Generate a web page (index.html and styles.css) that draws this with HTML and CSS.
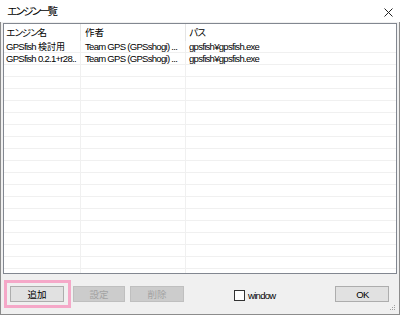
FILE: index.html
```html
<!DOCTYPE html>
<html lang="ja">
<head>
<meta charset="utf-8">
<link rel="stylesheet" href="styles.css">
</head>
<body>
<div class="window">
  <div class="titlebar">
    <span class="title jp">エンジン一覧</span>
    <svg class="close" width="9" height="9" viewBox="0 0 9 9"><path d="M0.5 0.5 L8.5 8.5 M8.5 0.5 L0.5 8.5" stroke="#222" stroke-width="1" fill="none"/></svg>
  </div>
  <div class="client">
    <div class="list">
      <div class="row head">
        <div class="cell c1"><span class="jp kana">エンジン名</span></div>
        <div class="cell c2"><span class="jp">作者</span></div>
        <div class="cell c3"><span class="jp kana">パス</span></div>
      </div>
      <div class="body">
        <div class="row"><div class="cell c1">GPSfish <span class="jp">検討用</span></div><div class="cell c2">Team GPS (GPSshogi) ...</div><div class="cell c3">gpsfish¥gpsfish.exe</div></div>
        <div class="row"><div class="cell c1">GPSfish 0.2.1+r28..</div><div class="cell c2">Team GPS (GPSshogi) ...</div><div class="cell c3">gpsfish¥gpsfish.exe</div></div>
        <div class="row"><div class="cell c1"></div><div class="cell c2"></div><div class="cell c3"></div></div>
        <div class="row"><div class="cell c1"></div><div class="cell c2"></div><div class="cell c3"></div></div>
        <div class="row"><div class="cell c1"></div><div class="cell c2"></div><div class="cell c3"></div></div>
        <div class="row"><div class="cell c1"></div><div class="cell c2"></div><div class="cell c3"></div></div>
        <div class="row"><div class="cell c1"></div><div class="cell c2"></div><div class="cell c3"></div></div>
        <div class="row"><div class="cell c1"></div><div class="cell c2"></div><div class="cell c3"></div></div>
        <div class="row"><div class="cell c1"></div><div class="cell c2"></div><div class="cell c3"></div></div>
        <div class="row"><div class="cell c1"></div><div class="cell c2"></div><div class="cell c3"></div></div>
        <div class="row"><div class="cell c1"></div><div class="cell c2"></div><div class="cell c3"></div></div>
        <div class="row"><div class="cell c1"></div><div class="cell c2"></div><div class="cell c3"></div></div>
        <div class="row"><div class="cell c1"></div><div class="cell c2"></div><div class="cell c3"></div></div>
        <div class="row"><div class="cell c1"></div><div class="cell c2"></div><div class="cell c3"></div></div>
        <div class="row"><div class="cell c1"></div><div class="cell c2"></div><div class="cell c3"></div></div>
        <div class="row"><div class="cell c1"></div><div class="cell c2"></div><div class="cell c3"></div></div>
        <div class="row"><div class="cell c1"></div><div class="cell c2"></div><div class="cell c3"></div></div>
        <div class="row"><div class="cell c1"></div><div class="cell c2"></div><div class="cell c3"></div></div>
        <div class="row"><div class="cell c1"></div><div class="cell c2"></div><div class="cell c3"></div></div>
        <div class="row"><div class="cell c1"></div><div class="cell c2"></div><div class="cell c3"></div></div>
      </div>
    </div>
    <div class="footer">
      <div class="btn btn-add highlight"><span class="jp">追加</span></div>
      <div class="btn disabled btn-set"><span class="jp">設定</span></div>
      <div class="btn disabled btn-del"><span class="jp">削除</span></div>
      <label class="check"><span class="box"></span><span class="check-label">window</span></label>
      <div class="btn btn-ok">OK</div>
      <svg class="grip" width="8" height="8" viewBox="0 0 8 8"><g fill="#a0a0a0"><rect x="6" y="0" width="1" height="1"/><rect x="4" y="2" width="1" height="1"/><rect x="6" y="2" width="1" height="1"/><rect x="2" y="4" width="1" height="1"/><rect x="4" y="4" width="1" height="1"/><rect x="6" y="4" width="1" height="1"/></g></svg>
    </div>
  </div>
</div>
</body>
</html>
```

FILE: styles.css
```css
html, body {
  margin: 0;
  padding: 0;
  background: #f0f0f0;
}
body {
  font-family: "Liberation Sans", "Noto Sans CJK JP", sans-serif;
  font-size: 9.5px;
  letter-spacing: -0.7px;
  color: #000;
}
.window {
  width: 400px;
  height: 315px;
  display: flex;
  flex-direction: column;
  overflow: hidden;
}
.jp {
  font-family: "Noto Sans CJK JP", sans-serif;
  letter-spacing: 0;
}
.titlebar {
  height: 22px;
  background: #fff;
  display: flex;
  align-items: center;
  padding-left: 7px;
  padding-right: 7px;
  flex-shrink: 0;
}
.title {
  font-size: 10.5px;
  letter-spacing: -2.4px;
  flex: 1;
  line-height: 14px;
}
.close {
  display: block;
  margin-top: 2px;
}
.client {
  flex: 1;
  display: flex;
  flex-direction: column;
  border-left: 1px solid #8c8c8c;
  border-right: 1px solid #8c8c8c;
  border-bottom: 1px solid #8c8c8c;
  padding: 1px 2px 0 2px;
}
.list {
  height: 249px;
  border: 1px solid #828790;
  background: #fff;
  display: flex;
  flex-direction: column;
  overflow: hidden;
}
.row {
  display: grid;
  grid-template-columns: 77px 105px 1fr;
  height: 12px;
  border-bottom: 1px solid #f0f0f0;
  box-sizing: border-box;
}
.row.head {
  height: 17px;
  border-bottom: none;
}
.head .cell {
  border-right-color: #e5e5e5;
  line-height: 17px;
}
.cell {
  border-right: 1px solid #f0f0f0;
  padding-left: 3px;
  line-height: 11px;
  white-space: nowrap;
  overflow: hidden;
}
.c1 { padding-left: 2px; }
.c2 { padding-left: 4px; }
.c3 { border-right: none; padding-left: 3px; }
.cell .jp {
  font-size: 9px;
}
.cell .kana {
  letter-spacing: -1.6px;
}
.head .cell .jp {
  font-size: 9.5px;
}
.body {
  flex: 1;
  overflow: hidden;
}
.footer {
  flex: 1;
  display: flex;
  align-items: center;
  padding-left: 7px;
  position: relative;
}
.btn {
  height: 16px;
  box-sizing: border-box;
  border: 1px solid #adadad;
  background: #e1e1e1;
  display: flex;
  align-items: center;
  justify-content: center;
}
.btn .jp {
  font-size: 9.5px;
}
.btn-add {
  width: 54px;
  position: relative;
}
.highlight::after {
  content: "";
  position: absolute;
  left: -7px;
  top: -7px;
  right: -8px;
  bottom: -7px;
  border: 3px solid #f5a8c8;
}
.btn-set {
  width: 52px;
  margin-left: 9px;
}
.btn-del {
  width: 54px;
  margin-left: 5px;
}
.disabled {
  background: #cccccc;
  border-color: #bfbfbf;
  color: #a3a3a3;
}
.check {
  display: flex;
  align-items: center;
  margin-left: 50px;
  margin-top: 3px;
}
.box {
  width: 9px;
  height: 9px;
  border: 1px solid #333;
  background: #fff;
}
.check-label {
  margin-left: 3px;
}
.btn-ok {
  width: 54px;
  margin-left: 60px;
}
.grip {
  position: absolute;
  right: 1px;
  bottom: 1px;
}
```
